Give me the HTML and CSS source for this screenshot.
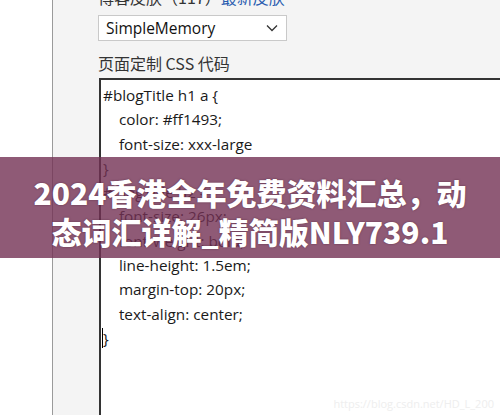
FILE: index.html
```html
<!DOCTYPE html>
<html lang="zh-CN">
<head>
    <meta charset="UTF-8">
    <meta name="viewport" content="width=device-width, initial-scale=1.0">
    <title>页面定制 CSS 代码</title>
    <link rel="stylesheet" href="styles.css">
</head>
<body>
    <div class="page">
        <div class="side"></div>
        <div class="panel">
            <div class="skin-label">博客皮肤（117）<a class="skin-link" href="#">最新皮肤</a></div>
            <div class="select">
                <span>SimpleMemory</span>
                <svg class="chevron" width="12" height="8" viewBox="0 0 12 8">
                    <path d="M1 1.5 L6 6.5 L11 1.5" fill="none" stroke="#333" stroke-width="1.3"/>
                </svg>
            </div>
            <div class="field-label">页面定制 CSS 代码</div>
            <div class="editor">
<pre class="code">#blogTitle h1 a {
    color: #ff1493;
    font-size: xxx-large
}
#blogTitle h2 {
    font-size: 26px;
    font-weight: bold;
    line-height: 1.5em;
    margin-top: 20px;
    text-align: center;
<span class="caret-line">}</span></pre>
            </div>
        </div>
    </div>

    <div class="banner">
        <div class="banner-title">2024香港全年免费资料汇总，动<br>态词汇详解_精简版NLY739.1</div>
    </div>

    <div class="watermark">https://blog.csdn.net/HD_L_200</div>
</body>
</html>
```

FILE: styles.css
```css
body {
    margin: 0;
    background-color: #fff;
    font-family: "Open Sans", "Noto Sans CJK SC", sans-serif;
    color: #222;
}
.page {
    position: relative;
    display: flex;
    width: 500px;
    height: 415px;
    overflow: hidden;
}
.side {
    width: 52px;
    flex-shrink: 0;
    background-color: #fff;
    border-right: 1px solid #9a9a9a;
}
.panel {
    flex: 1;
    background-color: #f4f4f4;
    padding-left: 45px;
}
.skin-label {
    margin-top: -13px;
    height: 20px;
    line-height: 20px;
    font-size: 16px;
    color: #333;
    font-family: "Noto Sans CJK SC", sans-serif;
}
.skin-link {
    color: #2a5db0;
    text-decoration: none;
}
.select {
    display: flex;
    align-items: center;
    justify-content: space-between;
    box-sizing: border-box;
    width: 189px;
    height: 26px;
    margin-top: 8px;
    padding: 0 8px 0 7px;
    background-color: #fff;
    border: 1px solid #c9c9c9;
    font-size: 15.5px;
    color: #111;
}
.chevron {
    display: block;
}
.field-label {
    margin-top: 11px;
    height: 22px;
    line-height: 22px;
    font-size: 16px;
    color: #333;
    font-family: "Noto Sans CJK SC", sans-serif;
}
.editor {
    margin-top: 4px;
    margin-left: 1px;
    height: 400px;
    background-color: #fff;
    border-top: 2px solid #333;
    border-left: 2px solid #333;
    padding: 3px 0 0 2px;
}
.code {
    margin: 0;
    font-family: "Open Sans", sans-serif;
    font-size: 15.3px;
    line-height: 24.3px;
    color: #1a1a1a;
}
.caret-line {
    border-left: 1px solid #000;
    margin-left: -1px;
}
.banner {
    position: absolute;
    left: 0;
    top: 157px;
    width: 500px;
    height: 101px;
    background-color: rgba(115, 49, 84, 0.8);
}
.banner-title {
    padding-top: 16px;
    text-align: center;
    font-family: "Noto Sans CJK SC", sans-serif;
    font-weight: 900;
    font-size: 30px;
    line-height: 39px;
    color: #fff;
    text-shadow: 0 0 2px rgba(60, 20, 40, 0.6);
}
.watermark {
    position: absolute;
    right: 6px;
    top: 396px;
    font-size: 11px;
    color: #eeeeee;
    font-family: "Open Sans", sans-serif;
}
```
